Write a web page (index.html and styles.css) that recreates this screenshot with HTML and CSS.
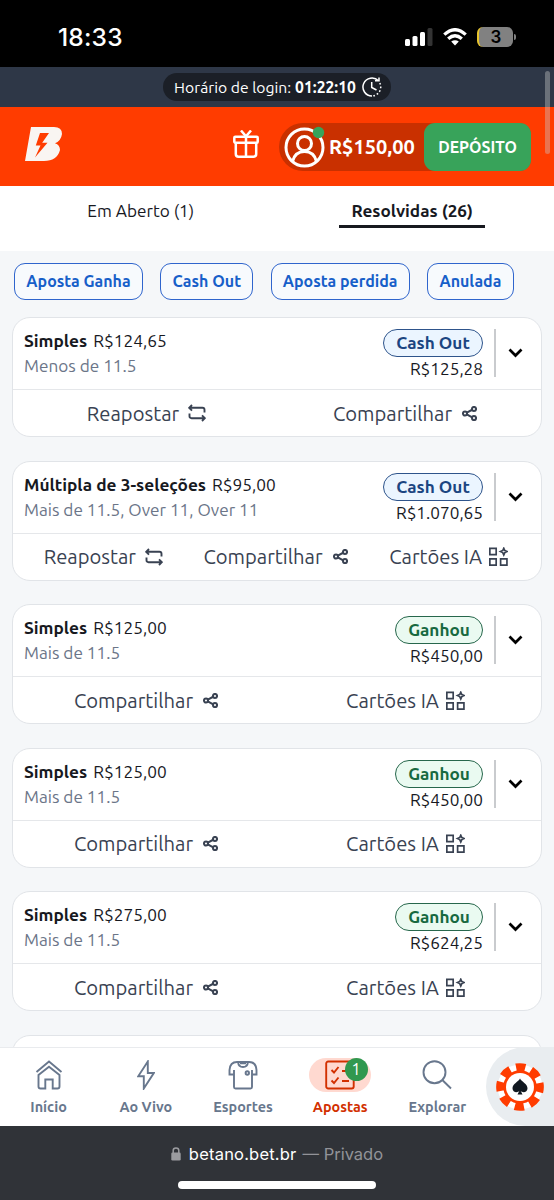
FILE: index.html
```html
<!DOCTYPE html>
<html lang="pt-BR">
<head>
  <meta charset="UTF-8" />
  <meta name="viewport" content="width=device-width, initial-scale=1.0"/>
  <title>Apostas Resolvidas</title>
  <link rel="stylesheet" href="styles.css">
</head>
<body>
  <!-- icons used more than once -->
  <svg class="sprite">
    <symbol id="repeat" viewBox="0 0 18 18"><path d="M4 1 1.200 3.800 4 6.600M1.500 3.800H14.500Q16.500 3.800 16.500 5.800V8.500M14 11.400 16.800 14.200 14 17M16.500 14.200H3.500Q1.500 14.200 1.500 12.200V9.500"/></symbol>
    <symbol id="share" viewBox="0 0 14 14"><path d="M4.500 6.100 9.500 3.500M4.500 7.900 9.500 10.700"/><circle cx="2.800" cy="7" r="1.900"/><circle cx="11.200" cy="2.800" r="1.900"/><circle cx="11.200" cy="11.300" r="1.900"/></symbol>
    <symbol id="cards" viewBox="0 0 18 18"><path d="M.8 1.300H6.800V7.300H.8ZM.8 11.200H6.800V17.200H.8ZM11 11.200H17V17.200H11ZM14 1.200 15 3.400 17.100 4.300 15 5.300 14 7.500 13 5.300 10.900 4.300 13 3.400Z"/></symbol>
    <symbol id="down" viewBox="0 0 14 10"><path d="M1 1.500 7 7.500 13 1.500"/></symbol>
  </svg>

  <div class="phone">
    <div class="status">
      <span class="time">18:33</span>
      <div class="status-icons">
        <svg width="28" height="18" viewBox="0 0 28 18" fill="#fff"><rect x="0" y="11" width="5" height="7" rx="1.500"/><rect x="7.500" y="8" width="5" height="10" rx="1.500"/><rect x="15" y="4" width="5" height="14" rx="1.500"/><rect x="22.500" y="0" width="5" height="18" rx="1.500" fill="#333"/></svg>
        <svg width="24" height="18" viewBox="0 0 24 18" fill="none" stroke="#fff" stroke-width="3.300"><path d="M1.300 6.600Q12-3.200 22.700 6.600M5.200 10.700Q12 4.700 18.800 10.700"/><path d="M12 17.500 8.200 13.600Q12 10.700 15.800 13.600Z" fill="#fff" stroke="none"/></svg>
        <div class="battery">3</div>
      </div>
    </div>

    <div class="login">
      <div class="login-pill">
        <span>Horário de login:</span> <b>01:22:10</b>
        <svg width="20" height="20" viewBox="0 0 20 20" fill="none" stroke="#fff" stroke-width="1.500"><path d="M10 19A9 9 0 1 1 16.500 3.800M13 3.800H17V.5M9.700 5V10.500L14.500 13"/><path d="M17.800 6A9 9 0 0 1 10 19" stroke-dasharray="1.700 2"/></svg>
      </div>
    </div>

    <header class="header">
      <svg class="logo" width="38" height="34" viewBox="0 0 38 34"><path fill="#f9f5f2" fill-rule="evenodd" d="M6 0H29Q37 0 37 7Q36 14 30 16.300Q35 18 35 23Q32 34 19 34H0ZM15 6 10.800 18.500H15.500L10 30.500 22.500 15.800H17.200L24 6Z"/></svg>
      <svg class="gift" width="26" height="28" viewBox="0 0 26 28" fill="none" stroke="#fff" stroke-width="2.500"><rect x="1.300" y="6.700" width="23.400" height="6" rx="1"/><path d="M2.800 12.500V24Q2.800 26.700 5.500 26.700H20.500Q23.200 26.700 23.200 24V12.500M13 6.500V26.500M8 .5 13 6.300 18 .5"/></svg>
      <div class="account">
        <svg width="42" height="42" viewBox="0 0 42 42" fill="none" stroke="#fff" stroke-width="3"><circle cx="20.500" cy="21.500" r="18.500"/><circle cx="20.500" cy="17.500" r="7"/><path d="M8.500 35.500Q11 25.500 20.500 25.500T32.500 35.500"/><circle cx="34.500" cy="6.500" r="5.700" fill="#38a35a" stroke="none"/></svg>
        <span class="balance">R$150,00</span>
        <button class="deposit">DEPÓSITO</button>
      </div>
      <div class="scrollbar"></div>
    </header>

    <div class="tabs">
      <div class="tab"><span>Em Aberto (1)</span></div>
      <div class="tab active"><span>Resolvidas (26)</span></div>
    </div>

    <main class="content">
      <div class="filters">
        <button class="f1">Aposta Ganha</button>
        <button class="f2">Cash Out</button>
        <button class="f3">Aposta perdida</button>
        <button class="f4">Anulada</button>
      </div>

      <div class="card">
        <div class="bet">
          <div class="info"><p><b>Simples</b> R$124,65</p><p class="pick">Menos de 11.5</p></div>
          <div class="outcome"><span class="tag cashout">Cash Out</span><span class="amount">R$125,28</span></div>
          <div class="toggle"><svg><use href="#down"/></svg></div>
        </div>
        <div class="actions">
          <div>Reapostar <svg class="repeat"><use href="#repeat"/></svg></div>
          <div>Compartilhar <svg class="share"><use href="#share"/></svg></div>
        </div>
      </div>

      <div class="card">
        <div class="bet">
          <div class="info"><p><b>Múltipla de 3-seleções</b> R$95,00</p><p class="pick">Mais de 11.5, Over 11, Over 11</p></div>
          <div class="outcome"><span class="tag cashout">Cash Out</span><span class="amount">R$1.070,65</span></div>
          <div class="toggle"><svg><use href="#down"/></svg></div>
        </div>
        <div class="actions">
          <div>Reapostar <svg class="repeat"><use href="#repeat"/></svg></div>
          <div>Compartilhar <svg class="share"><use href="#share"/></svg></div>
          <div>Cartões IA <svg class="cards"><use href="#cards"/></svg></div>
        </div>
      </div>

      <div class="card">
        <div class="bet">
          <div class="info"><p><b>Simples</b> R$125,00</p><p class="pick">Mais de 11.5</p></div>
          <div class="outcome"><span class="tag won">Ganhou</span><span class="amount">R$450,00</span></div>
          <div class="toggle"><svg><use href="#down"/></svg></div>
        </div>
        <div class="actions">
          <div>Compartilhar <svg class="share"><use href="#share"/></svg></div>
          <div>Cartões IA <svg class="cards"><use href="#cards"/></svg></div>
        </div>
      </div>

      <div class="card">
        <div class="bet">
          <div class="info"><p><b>Simples</b> R$125,00</p><p class="pick">Mais de 11.5</p></div>
          <div class="outcome"><span class="tag won">Ganhou</span><span class="amount">R$450,00</span></div>
          <div class="toggle"><svg><use href="#down"/></svg></div>
        </div>
        <div class="actions">
          <div>Compartilhar <svg class="share"><use href="#share"/></svg></div>
          <div>Cartões IA <svg class="cards"><use href="#cards"/></svg></div>
        </div>
      </div>

      <div class="card">
        <div class="bet">
          <div class="info"><p><b>Simples</b> R$275,00</p><p class="pick">Mais de 11.5</p></div>
          <div class="outcome"><span class="tag won">Ganhou</span><span class="amount">R$624,25</span></div>
          <div class="toggle"><svg><use href="#down"/></svg></div>
        </div>
        <div class="actions">
          <div>Compartilhar <svg class="share"><use href="#share"/></svg></div>
          <div>Cartões IA <svg class="cards"><use href="#cards"/></svg></div>
        </div>
      </div>

      <div class="card"></div>
    </main>

    <nav class="nav">
      <a class="item">
        <div class="icon"><svg width="28" height="30" viewBox="0 0 28 30"><path d="M1.500 12 14 1.500 26.500 12M3.500 15V26.500Q3.500 28.500 5.500 28.500H10.300V19.500H17.700V28.500H22.500Q24.500 28.500 24.500 26.500V15L14 6.800Z"/></svg></div>
        <span>Início</span>
      </a>
      <a class="item">
        <div class="icon"><svg width="18" height="30" viewBox="0 0 18 30"><path d="M10.800 1.500 1.200 16.300H6.800V28.500L16.800 13H10.800Z"/></svg></div>
        <span>Ao Vivo</span>
      </a>
      <a class="item">
        <div class="icon"><svg width="30" height="30" viewBox="0 0 30 30"><path d="M6 14.500H1.500V10Q2 2 9 2H21Q28 2 28.500 10V14.500H24M6 10V27Q6 28.500 7.500 28.500H22.500Q24 28.500 24 27V10M10 2Q10.500 7 15 7T20 2M12 3.300H18"/><circle cx="19.300" cy="13" r="1.700"/></svg></div>
        <span>Esportes</span>
      </a>
      <a class="item selected">
        <div class="icon"><svg width="30" height="30" viewBox="0 0 30 30"><rect x="1.200" y="1.500" width="27.500" height="27" rx="2"/><path d="M6.500 10 9 12.500 13.500 7M6.500 20.500 9 23 13.500 17.500M17 11H22M17 21H24"/></svg></div>
        <span class="badge">1</span>
        <span>Apostas</span>
      </a>
      <a class="item">
        <div class="icon"><svg width="30" height="30" viewBox="0 0 30 30"><circle cx="12.500" cy="12.200" r="11"/><path d="M20.300 20 29 28.500"/></svg></div>
        <span>Explorar</span>
      </a>
      <div class="casino">
        <svg width="48" height="48" viewBox="0 0 48 48"><circle cx="24" cy="24" r="22.500" fill="#fff"/><circle cx="24" cy="24" r="18.700" fill="none" stroke="#ff3c00" stroke-width="10.300" pathLength="96" stroke-dasharray="7.200 4.800" stroke-dashoffset="3.100"/><circle cx="24" cy="24" r="15" fill="none" stroke="#ff3c00" stroke-width="3.500"/><circle cx="24" cy="24" r="14" fill="#fff"/><path fill="#111820" d="M24 15.500C22.500 19 16.500 20.500 16.500 25.300C16.500 29.500 21.500 30.400 23.400 27.800L21.500 31.500H26.500L24.600 27.800C26.500 30.400 31.500 29.500 31.500 25.300C31.500 20.500 25.500 19 24 15.500Z"/></svg>
      </div>
    </nav>

    <footer class="browser">
      <div class="address">
        <svg width="10" height="14" viewBox="0 0 10 14"><path d="M2.200 6V3.500Q2.200 1 5 1T7.800 3.500V6" fill="none" stroke="#9b9ca0" stroke-width="1.500"/><rect x=".3" y="5.500" width="9.400" height="8" rx="1.300" fill="#9b9ca0"/></svg>
        <span class="host">betano.bet.br</span><span class="private">— Privado</span>
      </div>
      <div class="home-bar"></div>
    </footer>
  </div>
</body>
</html>
```
FILE: styles.css
```css
* {
  box-sizing: border-box;
}

body {
  margin: 0;
  font-family: Ubuntu, "Noto Sans", sans-serif;
  color: #17191f;
}

p {
  margin: 0;
}

button {
  font-family: inherit;
  padding: 0;
}

svg {
  flex-shrink: 0;
}

.sprite {
  display: none;
}

.phone {
  width: 554px;
  height: 1200px;
  display: flex;
  flex-direction: column;
  overflow: hidden;
}

/* phone status bar */
.status {
  height: 67px;
  flex-shrink: 0;
  background: #000;
  color: #fff;
  display: flex;
  justify-content: space-between;
  align-items: center;
  padding: 7px 38px 0 58px;
  font-family: Inter, sans-serif;
}

.time {
  font-size: 24.500px;
  font-weight: 500;
  letter-spacing: 0.2px;
}

.status-icons {
  display: flex;
  align-items: center;
  gap: 10px;
  margin-right: 3px;
}

.battery {
  position: relative;
  width: 36px;
  height: 20px;
  border-radius: 6px;
  border-left: 2px solid #e8c52c;
  background: #818181;
  color: #000;
  font-size: 17px;
  font-weight: 600;
  line-height: 20px;
  text-align: center;
}

.battery::after {
  content: "";
  position: absolute;
  right: -3px;
  top: 7px;
  width: 2px;
  height: 6px;
  border-radius: 0 2px 2px 0;
  background: #818181;
}

/* login time */
.login {
  height: 40px;
  flex-shrink: 0;
  background: #2e3747;
  display: flex;
  justify-content: center;
  align-items: center;
}

.login-pill {
  width: 228px;
  height: 28px;
  border-radius: 14px;
  background: #1b1f27;
  color: #fff;
  display: flex;
  justify-content: center;
  align-items: center;
  gap: 4px;
  padding: 0 0 1px 2px;
  font-size: 15.700px;
  white-space: nowrap;
}

.login-pill svg {
  margin-left: 2px;
}

.header {
  position: relative;
  height: 79px;
  flex-shrink: 0;
  background: #ff3c00;
  display: flex;
  align-items: center;
  padding: 0 23px 0 25px;
}

.gift {
  margin: 0 20px 6px auto;
}

.logo {
  margin-bottom: 5px;
}

.account {
  width: 252px;
  height: 48px;
  border-radius: 24px 12px 12px 24px;
  background: #c93000;
  display: flex;
  align-items: center;
  padding-left: 5px;
}

.balance {
  color: #fff;
  font-size: 20px;
  font-weight: 700;
  margin-left: 3px;
}

.deposit {
  width: 107px;
  height: 48px;
  margin-left: auto;
  border: none;
  border-radius: 11px;
  background: #38a35a;
  color: #fff;
  font-size: 15.800px;
  font-weight: 700;
}

.scrollbar {
  position: absolute;
  right: 4px;
  top: -36px;
  width: 5px;
  height: 83px;
  border-radius: 3px;
  background: rgba(200, 200, 200, 0.4);
}

.tabs {
  height: 65px;
  flex-shrink: 0;
  display: grid;
  grid-template-columns: 1fr 1fr;
  padding: 11px 6px 0 5px;
}

.tab {
  text-align: center;
  font-size: 17.200px;
}

.tab span {
  display: inline-block;
  line-height: 28px;
  height: 31px;
}

.tab.active span {
  width: 146px;
  font-weight: 700;
  border-bottom: 3px solid #17191f;
}

/* bets list */
.content {
  flex: 1;
  min-height: 0;
  overflow: hidden;
  background: #f5f7f9;
  padding: 12px 12px 0;
}

.filters {
  display: flex;
  gap: 17.300px;
  padding-left: 2px;
  margin-bottom: 17px;
}

.filters button {
  height: 37px;
  border: 1.500px solid #2f65cd;
  border-radius: 11px;
  background: #f7fafd;
  color: #175fc9;
  font-size: 16px;
  font-weight: 700;
  padding-bottom: 1px;
  white-space: nowrap;
}

.filters .f1 { width: 129px; }
.filters .f2 { width: 93px; }
.filters .f3 { width: 139px; }
.filters .f4 { width: 87px; }

.card {
  height: 120px;
  margin-bottom: 23.600px;
  border: 1.500px solid #e1e4e8;
  border-radius: 18px;
  background: #fff;
}

.bet {
  height: 72px;
  border-bottom: 1px solid #e5e7ea;
  display: flex;
  padding: 11px 11px 0;
}

.info {
  flex: 1;
  font-size: 17.300px;
  line-height: 23px;
  white-space: nowrap;
}

.info b {
  margin-right: 2px;
}

.info .pick {
  color: #6b7588;
  font-size: 17.200px;
  line-height: 28px;
}

.outcome {
  display: flex;
  flex-direction: column;
  align-items: flex-end;
}

.tag {
  height: 28px;
  border-radius: 14px;
  font-size: 17.200px;
  font-weight: 700;
  line-height: 26px;
  text-align: center;
}

.cashout {
  width: 100px;
  border: 1.500px solid #2e548b;
  background: #ebf5ff;
  color: #1b4581;
}

.won {
  width: 88px;
  border: 1.500px solid #27674c;
  background: #eafaf1;
  color: #176940;
}

.amount {
  font-size: 17.200px;
  line-height: 23px;
}

.toggle {
  width: 36px;
  height: 48px;
  margin-left: 11px;
  border-left: 2px solid #c9cbce;
  display: flex;
  align-items: center;
  padding-left: 12px;
}

.toggle svg {
  width: 15px;
  height: 10px;
  fill: none;
  stroke: #000;
  stroke-width: 2.700;
}

.actions {
  height: 46px;
  display: grid;
  grid-auto-flow: column;
  grid-auto-columns: 1fr;
  padding: 0 6px 0 4px;
  color: #394252;
  font-size: 20.200px;
}

.actions div {
  display: flex;
  justify-content: center;
  align-items: center;
  gap: 9px;
  white-space: nowrap;
}

.actions svg {
  width: 18px;
  height: 18px;
  fill: none;
  stroke: #394252;
  stroke-width: 1.900;
}

.actions .share {
  width: 15px;
  height: 15px;
  margin: 0 1px 0 1px;
}

.actions .cards {
  width: 19px;
  height: 19px;
  margin-left: -2px;
  stroke-width: 1.600;
}

/* bottom navigation */
.nav {
  position: relative;
  height: 79px;
  flex-shrink: 0;
  background: #fff;
  border-top: 1px solid #e9ebee;
  display: flex;
}

.item {
  position: relative;
  width: 97.200px;
  display: flex;
  flex-direction: column;
  align-items: center;
  padding-top: 10px;
  color: #68778d;
  font-size: 14.400px;
  font-weight: 700;
}

.item .icon {
  width: 62px;
  height: 34px;
  margin-bottom: 7px;
  border-radius: 18px;
  display: flex;
  justify-content: center;
  align-items: center;
}

.item svg {
  fill: none;
  stroke: currentColor;
  stroke-width: 1.900;
}

.item.selected {
  color: #d23000;
}

.selected .icon {
  background: #ffd9d0;
}

.badge {
  position: absolute;
  left: 53px;
  top: 10px;
  width: 23px;
  height: 23px;
  border-radius: 50%;
  background: #31984f;
  color: #fff;
  font-size: 16px;
  font-weight: 400;
  line-height: 23px;
  text-align: center;
}

.casino {
  position: absolute;
  right: 0;
  top: -1px;
  width: 68px;
  height: 79px;
  border-radius: 40px 0 0 40px;
  background: #e9edf0;
  padding: 16px 0 0 10px;
}

/* browser address bar */
.browser {
  height: 74px;
  flex-shrink: 0;
  background: #303338;
  color: #fff;
  display: flex;
  flex-direction: column;
  align-items: center;
  font-family: Inter, sans-serif;
  font-size: 16.500px;
}

.address {
  height: 55px;
  display: flex;
  align-items: center;
}

.host {
  margin: 0 6px 0 8px;
  letter-spacing: 0.2px;
}

.private {
  color: #929398;
}

.home-bar {
  width: 198px;
  height: 8px;
  border-radius: 4px;
  background: #fff;
}
```
